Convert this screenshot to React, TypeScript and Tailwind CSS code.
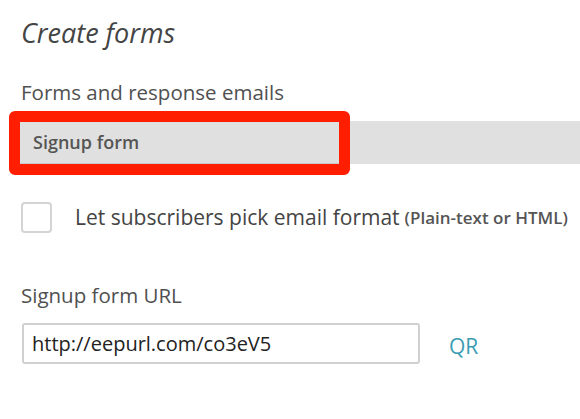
export default function App() {
  return (
    <div className="min-h-[419px] w-[580px] overflow-hidden bg-white font-['Open_Sans',sans-serif] text-[#444]">
      <h1 className="pl-[21px] pt-[16px] text-[27px] leading-[34px] italic">Create forms</h1>

      <p className="mt-[31px] pl-[21px] text-[20.5px] leading-[22px] text-[#505050]">Forms and response emails</p>

      <div className="mt-[18px] ml-[19px] flex h-[43px] bg-[#e0e0e0]">
        <div className="relative flex w-[321px] items-center border border-[#c8c8c8] px-[13px]">
          <span className="text-[18px] font-semibold text-[#555]">Signup form</span>
          <div className="pointer-events-none absolute -top-[11px] -bottom-[12px] -left-[11px] -right-[11px] rounded-[6px] border-[11px] border-[#ff1e00]" />
        </div>
      </div>

      <label className="mt-[38px] flex items-center pl-[21px]">
        <span className="h-[31px] w-[31px] shrink-0 rounded-[4px] border-2 border-[#d4d4d4] bg-white" />
        <span className="ml-[23px] text-[21px] leading-[31px] text-[#444]">Let subscribers pick email format</span>
        <span className="ml-[5px] text-[17px] leading-[31px] font-semibold text-[#555]">(Plain-text or HTML)</span>
      </label>

      <p className="mt-[51px] pl-[21px] text-[20.5px] leading-[22px] text-[#505050]">Signup form URL</p>

      <div className="mt-[17px] flex items-center pl-[22px]">
        <div className="flex h-[41px] w-[398px] items-center rounded-[3px] border-2 border-[#d0d0d0] px-[8px] text-[20px] text-[#222]">
          http://eepurl.com/co3eV5
        </div>
        <span className="ml-[29px] mt-[6px] text-[21px] text-[#3a9cb3]">QR</span>
      </div>
    </div>
  )
}
